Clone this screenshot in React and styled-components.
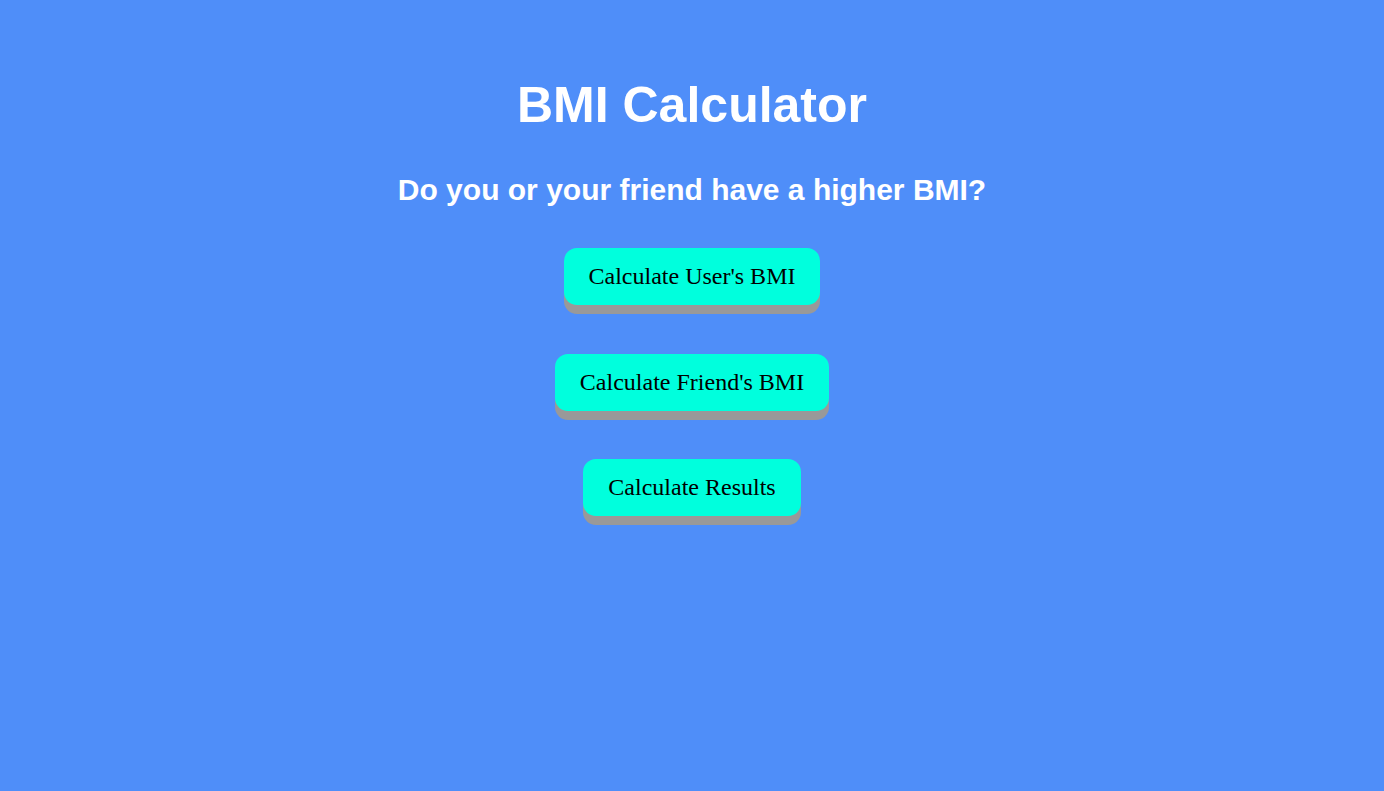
import React from 'react';
import styled, { createGlobalStyle } from 'styled-components';

const GlobalStyle = createGlobalStyle`
  html, body {
    margin: 0;
    padding: 0;
    background: #4f8ef9;
  }
  body {
    min-height: 100vh;
    font-family: "Liberation Serif", serif;
  }
`;

const Page = styled.div`
  display: flex;
  flex-direction: column;
  align-items: center;
  padding-top: 74px;
  min-height: 100vh;
  box-sizing: border-box;
`;

const Title = styled.h1`
  margin: 0;
  font-family: "Liberation Sans", Arial, sans-serif;
  font-size: 50px;
  line-height: 62px;
  font-weight: 700;
  color: #fff;
`;

const Subtitle = styled.h2`
  margin: 36px 0 0;
  font-family: "Liberation Sans", Arial, sans-serif;
  font-size: 30px;
  line-height: 36px;
  font-weight: 700;
  color: #fff;
`;

const Buttons = styled.div`
  display: flex;
  flex-direction: column;
  align-items: center;
  gap: 48.5px;
  margin-top: 40px;
`;

const Button = styled.button`
  font-family: "Liberation Serif", "Times New Roman", serif;
  font-size: 24px;
  color: #000;
  background: #00ffdd;
  border: none;
  border-radius: 13px;
  height: 57px;
  padding: 0 25px;
  box-shadow: 0 9px 0 #999;
  cursor: pointer;
`;

const App = () => {
  return (
    <>
      <GlobalStyle />
      <Page>
        <Title>BMI Calculator</Title>
        <Subtitle>Do you or your friend have a higher BMI?</Subtitle>
        <Buttons>
          <Button>Calculate User's BMI</Button>
          <Button>Calculate Friend's BMI</Button>
          <Button>Calculate Results</Button>
        </Buttons>
      </Page>
    </>
  );
};

export default App;
